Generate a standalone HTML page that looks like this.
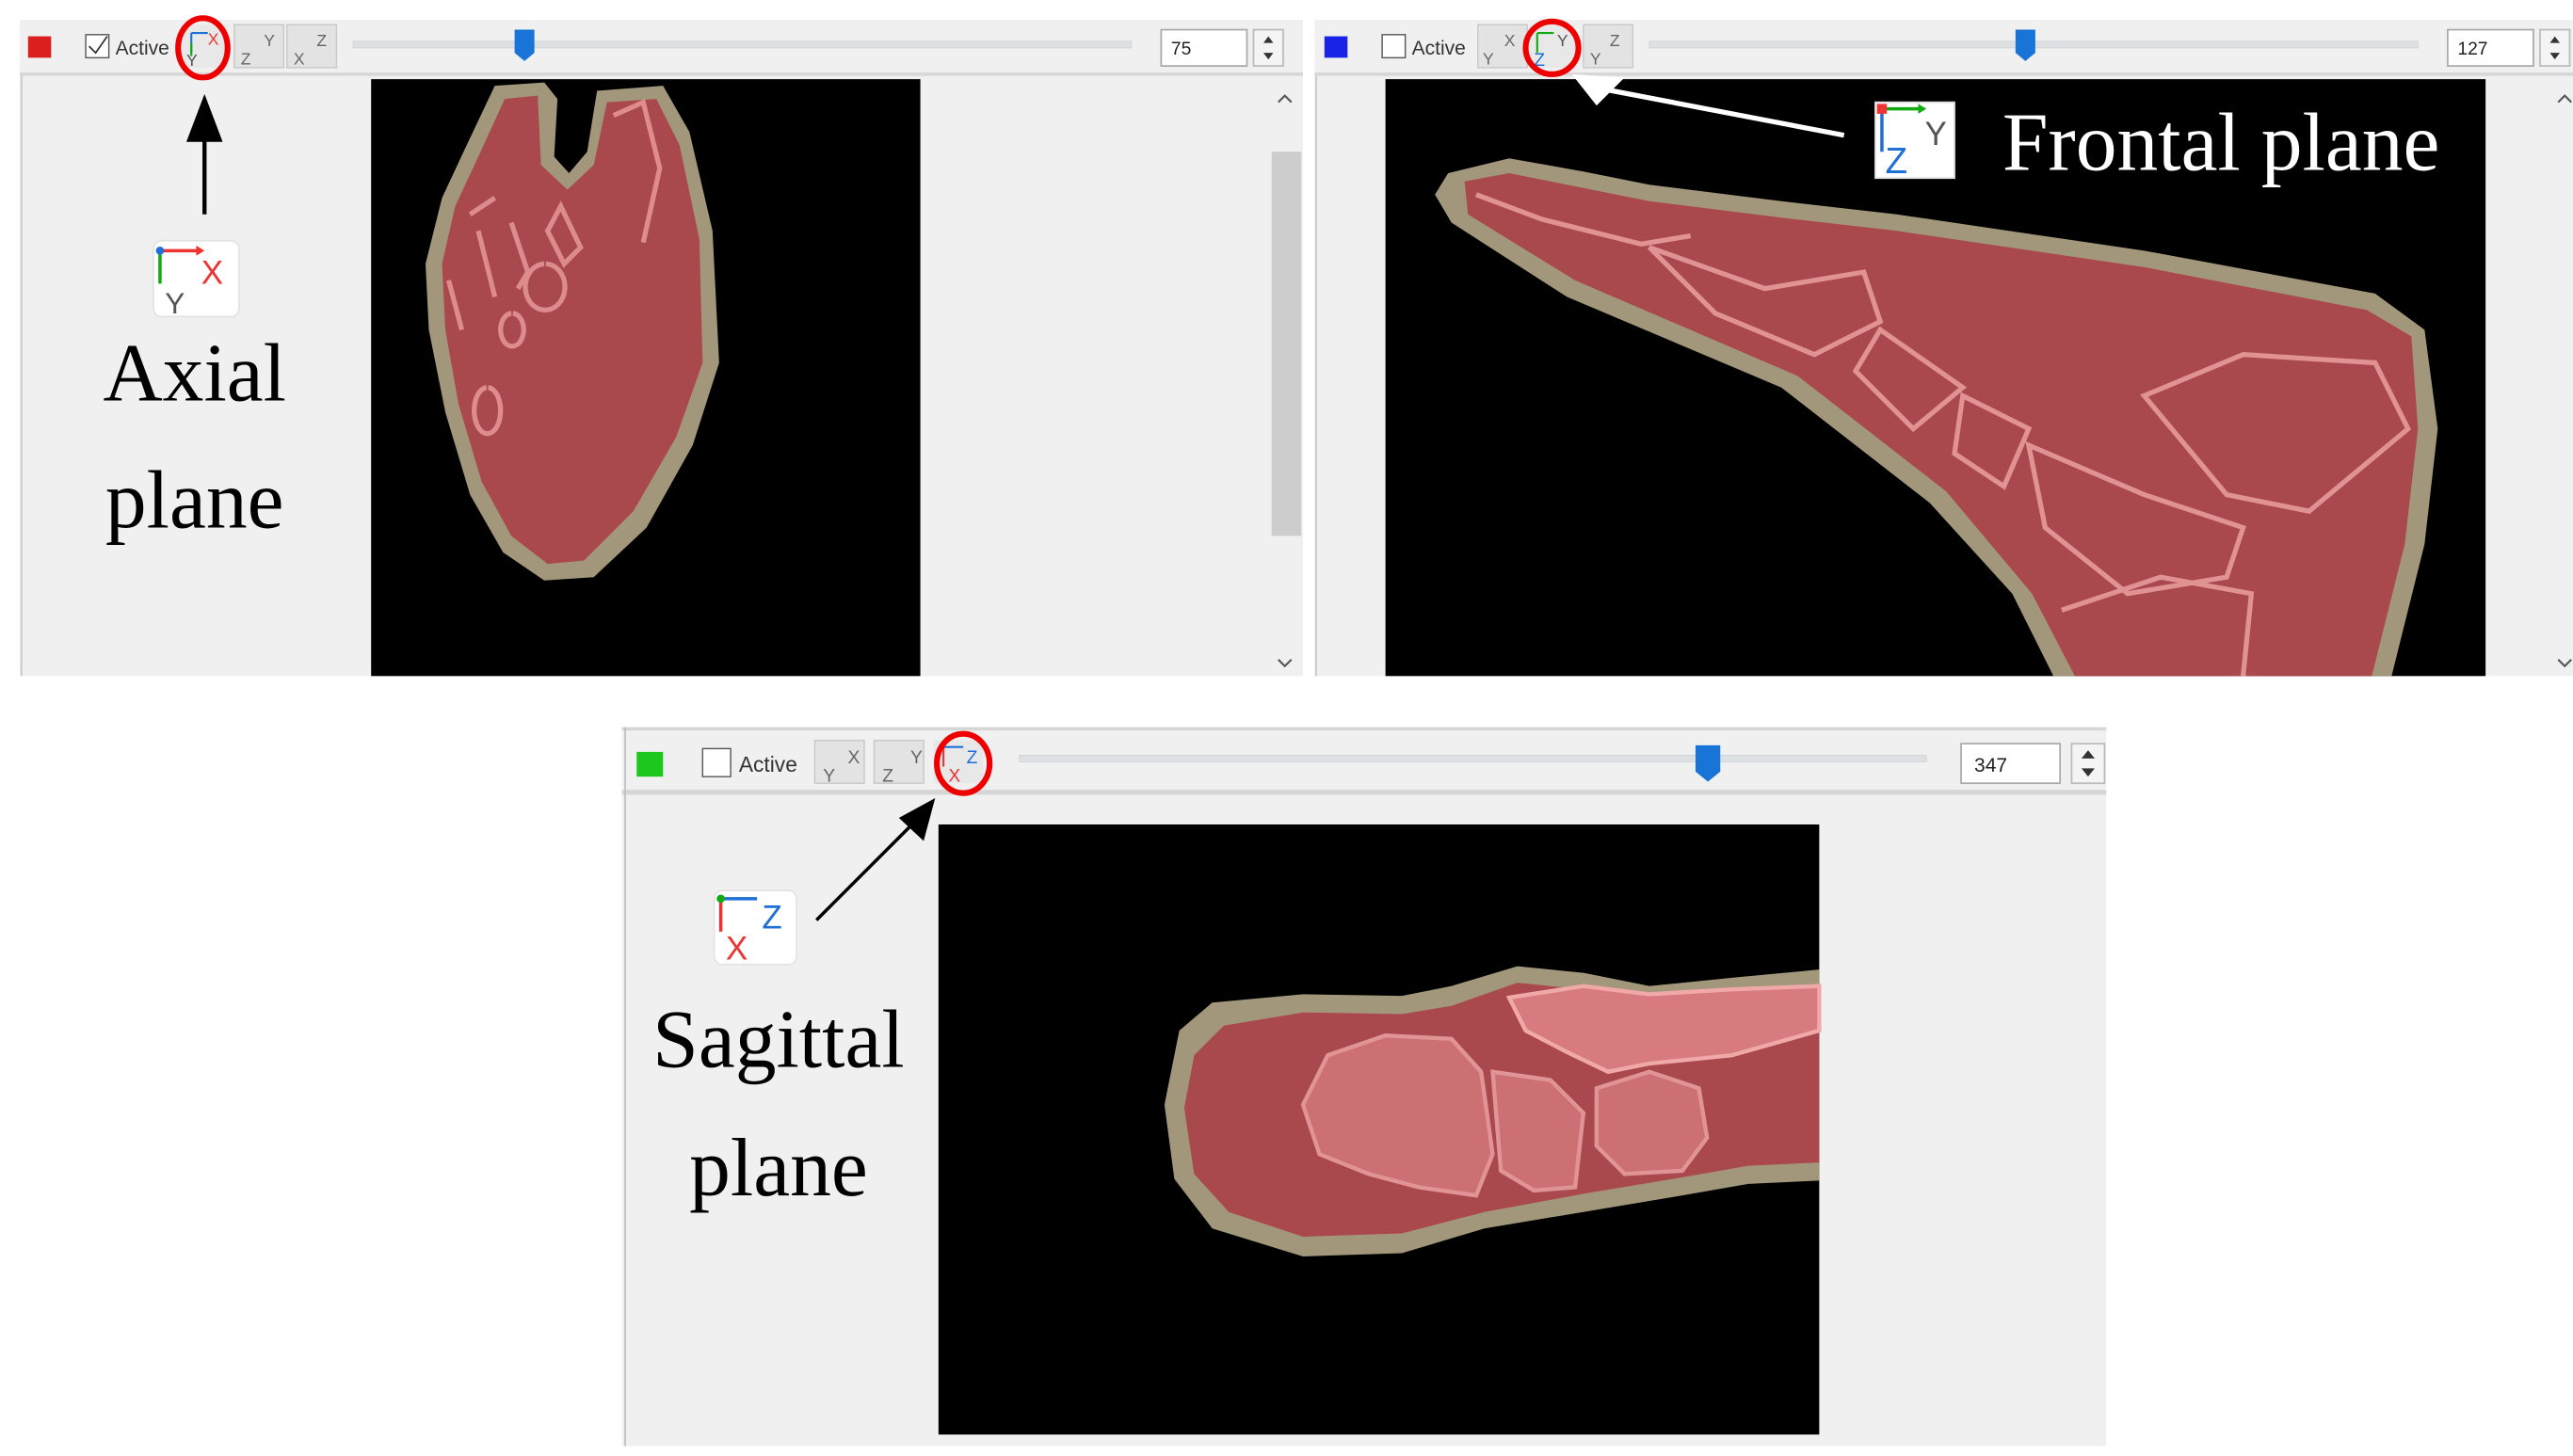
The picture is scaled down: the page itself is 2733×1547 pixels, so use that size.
<!DOCTYPE html>
<html><head><meta charset="utf-8">
<style>
html,body{margin:0;padding:0;background:#fff;width:2733px;height:1547px;overflow:hidden}
svg{display:block}
.ui{font-family:"Liberation Sans",sans-serif}
.big{font-family:"Liberation Serif",serif;fill:#000}
</style></head><body>
<svg width="2733" height="1547" viewBox="0 0 1560 883" xmlns="http://www.w3.org/2000/svg">
<defs>
<g id="axbtn">
  <rect x="0" y="0" width="30" height="26" fill="#e3e3e3" stroke="#c8c8c8" stroke-width="0.8"/>
</g>
</defs>

<!-- ============ TOP LEFT PANEL ============ -->
<rect x="12" y="12" width="778" height="398" fill="#f0f0f0"/>
<rect x="12" y="44" width="778" height="2" fill="#d6d6d6"/>
<line x1="13" y1="46" x2="13" y2="410" stroke="#c8c8c8"/>
<rect x="17" y="22" width="14" height="13" fill="#d9201f"/>
<rect x="52" y="21" width="14" height="14" fill="#fff" stroke="#555" stroke-width="0.8"/>
<path d="M54 28 l4 4 l7 -10" fill="none" stroke="#333" stroke-width="1"/>
<text x="70" y="33" class="ui" font-size="12" fill="#333">Active</text>
<rect x="110" y="15" width="28" height="26" fill="#e8e8e8"/>
<path d="M116 20 h10 M116 20 v12" stroke="#1e6fd6" stroke-width="1.2"/><path d="M116 26 v8" stroke="#1a1" stroke-width="1.2"/>
<text x="126" y="27" class="ui" font-size="10" fill="#e33">X</text><text x="113" y="40" class="ui" font-size="10" fill="#555">Y</text>
<use href="#axbtn" x="142" y="15"/><text x="160" y="28" class="ui" font-size="10" fill="#666">Y</text><text x="146" y="39" class="ui" font-size="10" fill="#666">Z</text>
<use href="#axbtn" x="174" y="15"/><text x="192" y="28" class="ui" font-size="10" fill="#666">Z</text><text x="178" y="39" class="ui" font-size="10" fill="#666">X</text>
<ellipse cx="123" cy="29" rx="15" ry="18" fill="none" stroke="#e00" stroke-width="3.5"/>
<rect x="214" y="25" width="472" height="4" fill="#dde1e4" stroke="#cfd3d6" stroke-width="0.5"/>
<path d="M312 18 h12 v14 l-6 5 l-6 -5 z" fill="#1874d6"/>
<rect x="704" y="18" width="52" height="22" fill="#fff" stroke="#aaa"/>
<text x="710" y="33" class="ui" font-size="11" fill="#222">75</text>
<rect x="760" y="18" width="18" height="22" fill="#f4f4f4" stroke="#bbb"/>
<path d="M766 26 l3 -4 l3 4z M766 32 l3 4 l3 -4z" fill="#333"/>
<rect x="770" y="50" width="20" height="360" fill="#f0f0f0"/>
<rect x="771" y="92" width="18" height="233" fill="#cdcdcd"/>
<path d="M775 62 l4 -4 l4 4 M775 400 l4 4 l4 -4" fill="none" stroke="#555" stroke-width="1.2"/>
<rect x="225" y="48" width="333" height="362" fill="#000"/>
<path d="M300 52 L330 50 L338 60 L336 95 L345 105 L356 92 L362 55 L402 52 L418 80 L432 140 L436 220 L420 270 L392 320 L360 350 L330 352 L305 335 L285 300 L270 250 L260 200 L258 160 L268 120 L282 90 Z" fill="#a2977a"/>
<path d="M306 60 L326 58 L328 100 L344 115 L360 100 L368 62 L398 60 L412 88 L424 145 L426 220 L410 265 L384 310 L354 340 L332 342 L310 325 L292 292 L278 245 L270 200 L268 160 L276 125 L290 95 Z" fill="#a9484d"/>
<g fill="none" stroke="#e7999a" stroke-width="3" opacity="0.85">
<path d="M372 70 l18 -8 l10 40 l-10 45"/><path d="M340 125 l12 25 l-10 10 l-10 -20z"/><path d="M310 135 l10 30 l-6 10"/><path d="M290 140 l10 40"/><path d="M272 170 l8 30"/><path d="M330 160 a12 14 0 1 0 1 0"/><path d="M295 235 a8 14 0 1 0 1 0"/><path d="M310 190 a7 10 0 1 0 1 0"/><path d="M285 130 l15 -10"/>
</g>

<rect x="93" y="146" width="52" height="46" rx="5" fill="#fff" stroke="#e3e3e3"/>
<path d="M97 152 h22" stroke="#e33" stroke-width="2"/><path d="M119 149 l5 3 l-5 3z" fill="#e33"/>
<path d="M97 152 v20" stroke="#1a1" stroke-width="2"/><circle cx="97" cy="152" r="2.5" fill="#1e6fd6"/>
<text x="122" y="172" class="ui" font-size="20" fill="#e33">X</text>
<text x="100" y="190" class="ui" font-size="18" fill="#555">Y</text>
<line x1="124" y1="130" x2="124" y2="85" stroke="#000" stroke-width="2.5"/>
<path d="M113 86 L124 57 L135 86 Z" fill="#000"/>
<text x="118" y="243" class="big" font-size="50" text-anchor="middle">Axial</text>
<text x="118" y="320" class="big" font-size="50" text-anchor="middle">plane</text>

<!-- ============ TOP RIGHT PANEL ============ -->
<rect x="797" y="12" width="763" height="398" fill="#f0f0f0"/>
<rect x="797" y="44" width="763" height="2" fill="#d6d6d6"/>
<line x1="798" y1="46" x2="798" y2="410" stroke="#c8c8c8"/>
<rect x="803" y="22" width="14" height="13" fill="#1a22e8"/>
<rect x="838" y="21" width="14" height="14" fill="#fff" stroke="#555" stroke-width="0.8"/>
<text x="856" y="33" class="ui" font-size="12" fill="#333">Active</text>
<use href="#axbtn" x="896" y="15"/><text x="912" y="28" class="ui" font-size="10" fill="#666">X</text><text x="899" y="39" class="ui" font-size="10" fill="#666">Y</text>
<rect x="927" y="15" width="28" height="26" fill="#e8e8e8"/>
<path d="M932 20 h10 M932 20 v12" stroke="#1a1" stroke-width="1.2"/>
<text x="944" y="28" class="ui" font-size="10" fill="#555">Y</text><text x="930" y="40" class="ui" font-size="11" fill="#1e6fd6">Z</text>
<use href="#axbtn" x="960" y="15"/><text x="976" y="28" class="ui" font-size="10" fill="#666">Z</text><text x="964" y="39" class="ui" font-size="10" fill="#666">Y</text>
<ellipse cx="941" cy="29" rx="16" ry="16" fill="none" stroke="#e00" stroke-width="3.5"/>
<rect x="1000" y="25" width="466" height="4" fill="#dde1e4" stroke="#cfd3d6" stroke-width="0.5"/>
<path d="M1222 18 h12 v14 l-6 5 l-6 -5 z" fill="#1874d6"/>
<rect x="1484" y="18" width="52" height="22" fill="#fff" stroke="#aaa"/>
<text x="1490" y="33" class="ui" font-size="11" fill="#222">127</text>
<rect x="1540" y="18" width="18" height="22" fill="#f4f4f4" stroke="#bbb"/>
<path d="M1546 26 l3 -4 l3 4z M1546 32 l3 4 l3 -4z" fill="#333"/>
<path d="M1551 62 l4 -4 l4 4 M1551 400 l4 4 l4 -4" fill="none" stroke="#555" stroke-width="1.2"/>
<rect x="840" y="48" width="667" height="362" fill="#000"/>
<path d="M878 105 L915 96 L960 104 L1000 112 L1080 122 L1150 130 L1300 152 L1440 178 L1470 200 L1478 260 L1470 330 L1450 410 L1245 410 L1220 360 L1170 305 L1080 235 L950 180 L880 135 L870 118 Z" fill="#a2977a"/>
<path d="M888 110 L915 105 L960 114 L1000 122 L1080 132 L1150 140 L1300 162 L1435 188 L1462 204 L1466 260 L1458 330 L1438 410 L1258 410 L1232 360 L1180 298 L1090 228 L955 170 L890 130 Z" fill="#a9484d"/>
<g fill="none" stroke="#eba0a0" stroke-width="3" opacity="0.85">
<path d="M895 118 l40 15 l60 15 l30 -5"/><path d="M1000 150 l70 25 l60 -10 l10 30 l-40 20 l-60 -25z"/>
<path d="M1140 200 l50 35 l-30 25 l-35 -35z"/><path d="M1190 240 l40 20 l-15 35 l-30 -20z"/>
<path d="M1300 240 l60 -25 l80 5 l20 40 l-60 50 l-50 -10z"/><path d="M1230 270 l70 30 l60 20 l-10 30 l-60 10 l-50 -40z"/>
<path d="M1250 370 l60 -20 l55 10 l-5 50"/>
</g>
<rect x="1137" y="62" width="48" height="46" fill="#fff" stroke="#ddd"/>
<path d="M1141 66 h22" stroke="#1a1" stroke-width="2"/><path d="M1163 63 l5 3 l-5 3z" fill="#1a1"/>
<path d="M1141 66 v26" stroke="#1e6fd6" stroke-width="2"/><rect x="1138" y="63" width="6" height="6" fill="#e33"/>
<text x="1167" y="88" class="ui" font-size="20" fill="#555">Y</text>
<text x="1143" y="105" class="ui" font-size="22" fill="#1e6fd6">Z</text>
<line x1="1118" y1="82" x2="972" y2="54" stroke="#fff" stroke-width="3"/>
<path d="M953 45 L985 47 L968 64 Z" fill="#fff"/>
<text x="1214" y="103" class="big" font-size="50" style="fill:#fff">Frontal plane</text>

<!-- ============ BOTTOM PANEL ============ -->
<rect x="377" y="441" width="900" height="436" fill="#f0f0f0"/>
<rect x="377" y="441" width="900" height="2" fill="#d6d6d6"/>
<rect x="377" y="479" width="900" height="3" fill="#d6d6d6"/>
<line x1="379" y1="441" x2="379" y2="877" stroke="#c0c0c0"/>
<rect x="386" y="456" width="16" height="15" fill="#1bc81b"/>
<rect x="426" y="454" width="17" height="17" fill="#fff" stroke="#555" stroke-width="0.8"/>
<text x="448" y="468" class="ui" font-size="13" fill="#333">Active</text>
<use href="#axbtn" x="494" y="449"/><text x="514" y="463" class="ui" font-size="11" fill="#666">X</text><text x="499" y="474" class="ui" font-size="11" fill="#666">Y</text>
<use href="#axbtn" x="530" y="449"/><text x="552" y="463" class="ui" font-size="11" fill="#666">Y</text><text x="535" y="474" class="ui" font-size="11" fill="#666">Z</text>
<rect x="566" y="449" width="30" height="26" fill="#e8e8e8"/>
<path d="M572 453 h12" stroke="#1e6fd6" stroke-width="1.2"/><path d="M572 453 v12" stroke="#e33" stroke-width="1.2"/>
<text x="586" y="463" class="ui" font-size="11" fill="#1e6fd6">Z</text><text x="575" y="474" class="ui" font-size="11" fill="#e33">X</text>
<ellipse cx="584" cy="463" rx="16" ry="18" fill="none" stroke="#e00" stroke-width="3.5"/>
<rect x="618" y="458" width="550" height="4" fill="#dde1e4" stroke="#cfd3d6" stroke-width="0.5"/>
<path d="M1028 452 h15 v16 l-7.5 6 l-7.5 -6 z" fill="#1874d6"/>
<rect x="1189" y="451" width="60" height="24" fill="#fff" stroke="#aaa"/>
<text x="1197" y="468" class="ui" font-size="12" fill="#222">347</text>
<rect x="1256" y="451" width="20" height="24" fill="#f4f4f4" stroke="#bbb"/>
<path d="M1262 460 l4 -5 l4 5z M1262 466 l4 5 l4 -5z" fill="#333"/>
<rect x="569" y="500" width="534" height="370" fill="#000"/>
<path d="M1103 588 L1050 593 L1000 598 L960 590 L920 586 L880 598 L850 604 L790 603 L735 608 L715 625 L706 670 L712 715 L735 745 L790 762 L850 760 L900 745 L960 735 L1020 725 L1060 718 L1103 716 Z" fill="#a2977a"/>
<path d="M1103 600 L1050 605 L1000 610 L960 600 L920 596 L880 610 L850 615 L790 614 L742 622 L724 640 L718 672 L724 712 L745 735 L790 750 L850 748 L900 735 L960 724 L1020 714 L1060 707 L1103 705 Z" fill="#a9484d"/>
<g fill="#d77b7e" stroke="#f0a8a8" stroke-width="2.5">
<path d="M915 605 L960 598 L1000 603 L1050 600 L1103 598 L1103 625 L1050 640 L1000 645 L975 650 L950 638 L925 625 Z"/>
<path d="M805 640 L840 628 L880 630 L898 650 L905 700 L895 725 L860 720 L830 712 L800 700 L790 670 Z" opacity="0.8"/>
<path d="M905 650 L940 655 L960 675 L955 720 L930 722 L910 710 Z" opacity="0.8"/>
<path d="M968 660 L1000 650 L1030 660 L1035 690 L1020 710 L985 712 L968 695 Z" opacity="0.8"/>
</g>
<rect x="433" y="540" width="50" height="45" rx="5" fill="#fff" stroke="#e3e3e3"/>
<path d="M437 545 h22" stroke="#1e6fd6" stroke-width="2"/><path d="M437 545 v20" stroke="#e33" stroke-width="2"/><circle cx="437" cy="545" r="2.5" fill="#1a1"/>
<text x="462" y="563" class="ui" font-size="20" fill="#1e6fd6">Z</text>
<text x="440" y="582" class="ui" font-size="20" fill="#e33">X</text>
<line x1="495" y1="558" x2="555" y2="498" stroke="#000" stroke-width="2"/>
<path d="M567 484 L560 510 L545 496 Z" fill="#000"/>
<text x="472" y="647" class="big" font-size="50" text-anchor="middle">Sagittal</text>
<text x="472" y="725" class="big" font-size="50" text-anchor="middle">plane</text>
</svg>
</body></html>
